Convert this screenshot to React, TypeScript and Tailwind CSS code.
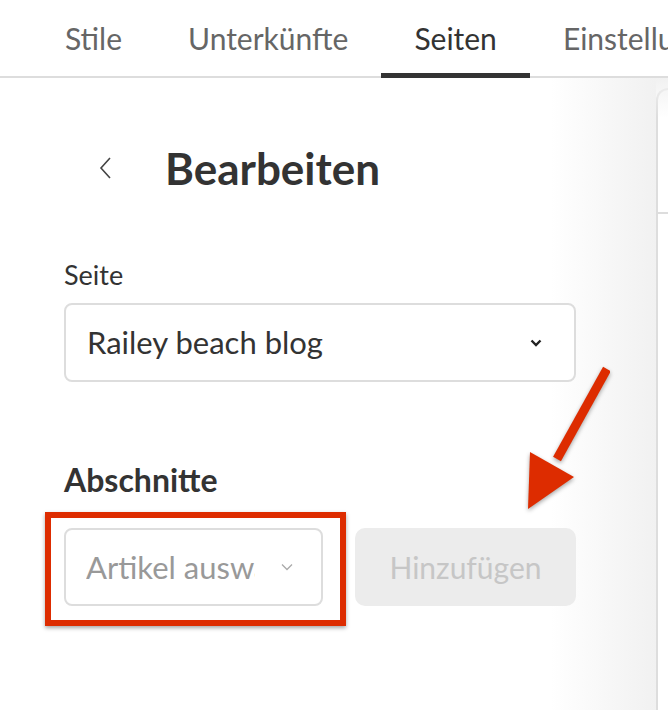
import { useState } from "react";

const tabs = ["Stile", "Unterkünfte", "Seiten", "Einstellungen"];

const App = () => {
    // states
    const [active, setActive] = useState<string>("Seiten");

    return (
        <div className="w-[668px] h-[710px] overflow-hidden bg-white text-[#333] font-['Lato','Noto_Sans',sans-serif] flex flex-col">
            {/* tabs */}
            <div className="h-[78px] shrink-0 border-b-2 border-[#dddddd] flex items-stretch pl-[32px] whitespace-nowrap">
                {tabs.map((t) => (
                    <div
                        key={t}
                        onClick={() => setActive(t)}
                        className={`cursor-pointer px-[33px] pt-[23px] text-[30px] leading-none border-b-[5px] -mb-[2px] ${active === t ? "text-[#333] border-[#333]" : "text-[#666] border-transparent"}`}
                    >
                        {t}
                    </div>
                ))}
            </div>

            <div className="flex-1 flex relative">
                <div className="absolute inset-x-0 top-0 h-10 bg-gradient-to-b from-[#f1f1f1] to-transparent pointer-events-none" />
                {/* left column */}
                <div className="relative flex-1 pl-16 pr-[80px] bg-gradient-to-r from-white from-[84%] to-[#f1f1f1]">
                    <div className="flex items-center h-[40px] mt-[70px]">
                        <svg width="14" height="22" viewBox="0 0 14 22" className="ml-[35px] mr-[52px]">
                            <path d="M11 1 L2 11 L11 21" fill="none" stroke="#444" strokeWidth="1.6" />
                        </svg>
                        <h1 className="text-[44px] font-bold leading-none">Bearbeiten</h1>
                    </div>

                    <div className="mt-[73px] h-[28px] text-[27px] leading-[28px]">Seite</div>
                    <div className="mt-[14px] w-[512px] h-[79px] border-2 border-[#dddddd] rounded-lg flex items-center justify-between pl-[21px] pr-[32px] bg-white">
                        <span className="text-[31px]">Railey beach blog</span>
                        <svg width="12" height="8" viewBox="0 0 12 8">
                            <path d="M1.5 1.5 L6 6 L10.5 1.5" fill="none" stroke="#222" strokeWidth="2.4" />
                        </svg>
                    </div>

                    <h2 className="mt-[82px] h-[32px] text-[32px] leading-[32px] font-bold">Abschnitte</h2>
                    <div className="mt-[32px] flex gap-[32px] w-[512px]">
                        <div className="relative">
                            <div className="w-[259px] h-[78px] border-2 border-[#dddddd] rounded-lg flex items-center pl-[20px] pr-[28px] bg-white">
                                <span className="flex-1 overflow-hidden whitespace-nowrap text-[31px] text-[#999] mr-[26px]">Artikel auswählen</span>
                                <svg width="12" height="8" viewBox="0 0 12 8">
                                    <path d="M1 1.5 L6 6.5 L11 1.5" fill="none" stroke="#aaa" strokeWidth="1.3" />
                                </svg>
                            </div>
                            {/* annotation box */}
                            <div className="absolute -left-[19px] -top-[16px] w-[301px] h-[114px] border-[6px] border-[#dd2c00] shadow-[0_2px_4px_rgba(0,0,0,0.35)] pointer-events-none" />
                        </div>
                        <button className="flex-1 h-[78px] rounded-[10px] bg-[#ececec] text-[30px] text-[#c6c6c6]">Hinzufügen</button>
                    </div>

                    {/* annotation arrow */}
                    <svg width="90" height="150" viewBox="0 0 90 150" className="absolute left-[520px] top-[287px] pointer-events-none drop-shadow-[0_2px_2px_rgba(0,0,0,0.35)]">
                        <path d="M87 4 L37 94" stroke="#dd2c00" strokeWidth="9" strokeLinecap="butt" />
                        <polygon points="10,87 54,112 8,144" fill="#dd2c00" />
                    </svg>
                </div>

                {/* right panel edge */}
                <div className="w-[12px] mt-[10px] border-l-2 border-t-2 border-[#dddddd] rounded-tl-[14px] bg-white flex flex-col">
                    <div className="h-[124px] border-b-2 border-[#dddddd]" />
                </div>
            </div>
        </div>
    );
};

export default App;
